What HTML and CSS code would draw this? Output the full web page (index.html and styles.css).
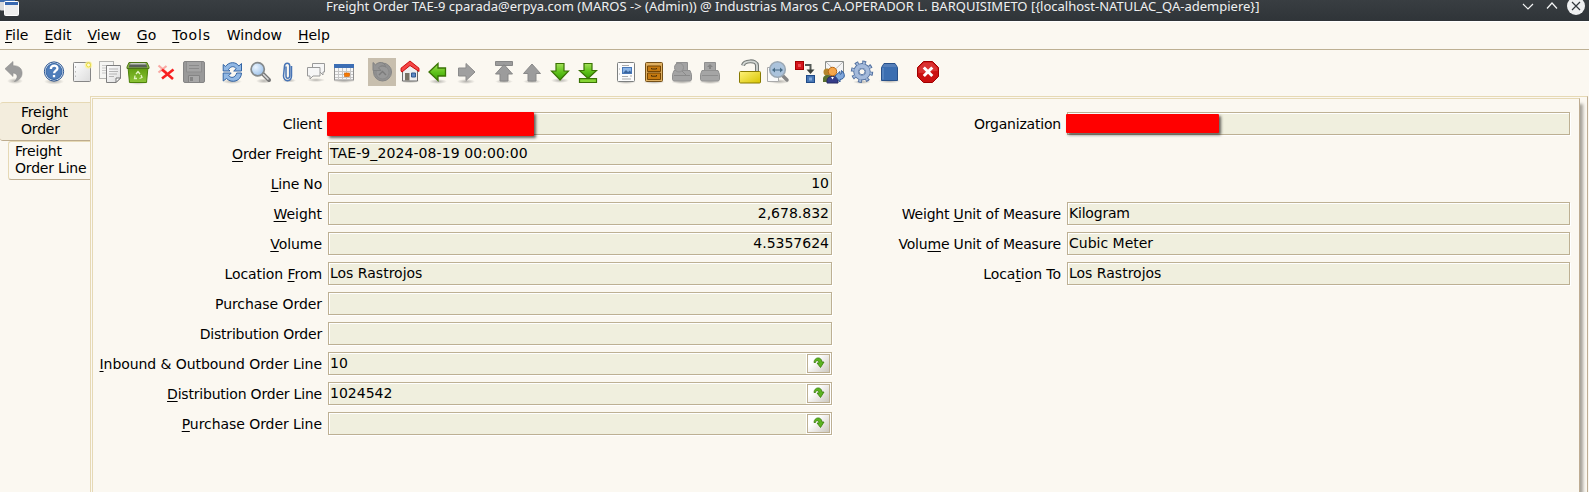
FILE: index.html
```html
<!DOCTYPE html>
<html lang="en">
<head>
<meta charset="utf-8">
<title>Freight Order</title>
<link rel="stylesheet" href="styles.css">
</head>
<body>
<svg class="defs" width="0" height="0" aria-hidden="true">
  <defs>
    <linearGradient id="green" x1="0" y1="0" x2="0" y2="1"><stop offset="0" stop-color="#a4e05a"/><stop offset=".5" stop-color="#62c41c"/><stop offset="1" stop-color="#36a005"/></linearGradient>
    <linearGradient id="paper" x1="0" y1="0" x2="1" y2="1"><stop offset="0" stop-color="#fff"/><stop offset="1" stop-color="#dcdcdc"/></linearGradient>
    <linearGradient id="gold" x1="0" y1="0" x2="1" y2="1"><stop offset="0" stop-color="#fff27a"/><stop offset="1" stop-color="#d8c400"/></linearGradient>
    <radialGradient id="lens" cx=".35" cy=".35" r=".8"><stop offset="0" stop-color="#eaf5ff"/><stop offset="1" stop-color="#91b9e6"/></radialGradient>
    <linearGradient id="can" x1="0" y1="0" x2="0" y2="1"><stop offset="0" stop-color="#5c9a0c"/><stop offset="1" stop-color="#8cc437"/></linearGradient>
    <radialGradient id="shade"><stop offset="0" stop-color="#000" stop-opacity=".28"/><stop offset="1" stop-color="#000" stop-opacity="0"/></radialGradient>
  </defs>
</svg>

<header class="titlebar">
  <svg class="app-icon" width="20" height="16" viewBox="0 0 20 16"><rect x="0" y="-4" width="15" height="14.500" rx="1" fill="#d9dadb"/><path d="M0 0h15v2H0z" fill="#3f6dae"/><rect x="4.500" y="1.500" width="14" height="14" rx="1" fill="#eee" stroke="#fff"/><path d="M5 2h13v3H5z" fill="#3868b0"/></svg>
  <div class="title">Freight Order TAE-9 cparada@erpya.com (MAROS -&gt; (Admin)) @ Industrias Maros C.A.OPERADOR L. BARQUISIMETO [{localhost-NATULAC_QA-adempiere}]</div>
  <svg class="controls" width="68" height="16" viewBox="0 0 68 16"><g fill="none" stroke="#f4f5f5" stroke-width="1.200"><path d="M3 4l5 5 5-5M27 8.500l5-5.500 5 5.500"/></g><circle cx="56" cy="6" r="9" fill="#eff0f1"/><path d="M52 2l8 8M60 2l-8 8" stroke="#31363b" stroke-width="1.200"/></svg>
</header>

<nav class="menubar">
  <span><u>F</u>ile</span><span><u>E</u>dit</span><span><u>V</u>iew</span><span><u>G</u>o</span><span class="tools"><u>T</u>ools</span><span>Window</span><span><u>H</u>elp</span>
</nav>

<div class="toolbar">
  <div class="group">
    <svg viewBox="0 0 28 28"><ellipse cx="15" cy="23" rx="8" ry="3" fill="url(#shade)"/><path d="M5 10.700L13 3.500v4.200c6.500-.2 9.500 3.500 9 8.300-.4 4-3.500 6.500-7.500 7.500 3-3 4.500-7.800-1.500-8.600v3.600z" fill="#9c9c9c" stroke="#8d8d8d" stroke-width=".6"/></svg>
  </div>
  <div class="group">
    <svg viewBox="0 0 28 28"><ellipse cx="14" cy="23.500" rx="10" ry="3" fill="url(#shade)"/><circle cx="14" cy="13.500" r="9.600" fill="#e8eff8" stroke="#25508e"/><circle cx="14" cy="13.500" r="8" fill="#4f7dba" stroke="#3465a4"/><path d="M10.800 11c.2-4.600 7-4.200 6.600-.5-.3 2.200-3.300 2.300-3.300 4.800M14 17v2.200" fill="none" stroke="#fff" stroke-width="2.300"/></svg>
    <svg viewBox="0 0 28 28"><rect x="5.500" y="4.500" width="17" height="19" rx=".8" fill="url(#paper)" stroke="#868686"/><path d="M7.500 8v2m0 3v1.500m0 3V19" stroke="#bbb"/><circle cx="20.500" cy="7" r="3.800" fill="#fff58d" opacity=".7"/><circle cx="20.500" cy="7" r="2" fill="#fffbd0" stroke="#eadb3a"/></svg>
    <svg viewBox="0 0 28 28"><rect x="3.500" y="3.500" width="14" height="17" fill="#f5f5f3" stroke="#b5b5b2"/><path d="M6 7.500h8M6 10h5M6 12.500h4M6 15h4" stroke="#c9c9c9"/><path d="M10.500 7.500h14v12.500l-4.500 4.500h-9.500z" fill="url(#paper)" stroke="#7e7e7e"/><path d="M13 11h9M13 13.500h9M13 16h8M13 18.500h5" stroke="#b4b4b4"/><path d="M24.500 20H20v4.500z" fill="#fff" stroke="#777"/></svg>
    <svg viewBox="0 0 28 28"><ellipse cx="14" cy="24" rx="11" ry="3" fill="url(#shade)"/><path d="M4 9h20l-1.500 15.500h-17z" fill="url(#can)" stroke="#4c8108"/><path d="M5 4.500h18l2 4.500v1.500H3V9z" fill="#8bbd40" stroke="#4e7317"/><path d="M6 5.500h16l1.500 4h-19z" fill="#595f58"/><path d="M6.500 5h15l.5 1.500H6z" fill="#c5cac2"/><path d="M12 16l2-2.500 2 2.500M17 17l1 2.500-2.500 1M13 20.500h-2.500l.5-3" fill="none" stroke="#e2f2c2" stroke-width="1.300"/></svg>
    <svg viewBox="0 0 28 28"><path d="M6.500 7.500l8 7M14.500 8l-8 6.500" stroke="#f9a9a3" stroke-width="2.200" fill="none"/><path d="M10 11.500l11 9.500M21.500 11.500L10 20.500" stroke="#f82020" stroke-width="2.600" fill="none"/></svg>
    <svg viewBox="0 0 28 28"><rect x="3.500" y="3.500" width="21" height="21" rx="1.500" fill="#999" stroke="#858585"/><path d="M6.500 4v10h15V4" fill="#a4a4a4" stroke="#8d8d8d"/><path d="M9 7.500h10M9 10.500h10" stroke="#8b8b8b"/><path d="M8.500 24v-6.500h11V24" fill="#a8a8a8" stroke="#848484"/><path d="M10 19h3v4h-3z" fill="#858585"/></svg>
  </div>
  <div class="group">
    <svg viewBox="0 0 28 28"><ellipse cx="14" cy="23.500" rx="10" ry="2.500" fill="url(#shade)"/><g fill="#91b8e4" stroke="#3465a4"><path d="M5.200 13V6.500l2.300 2C11 3.500 18 3.500 20.800 8l2.700-2.500v7.500h-7.800l2.500-2.300c-2-3-5.500-2.600-7.700.8l1.500 1.500z"/><path d="M23.500 15c-.2 8-9.500 11-15 5.500L5.200 23v-8h8l-2.500 2.700c2.500 2.800 6.500 2.300 8-2.700z"/></g></svg>
    <svg viewBox="0 0 28 28"><ellipse cx="18" cy="23" rx="8" ry="2.500" fill="url(#shade)"/><path d="M16.500 15.500l6.500 6.500" stroke="#777" stroke-width="4" stroke-linecap="round"/><path d="M17 16l5.500 5.500" stroke="#ddd" stroke-width="1.500"/><circle cx="11.700" cy="11.200" r="6.600" fill="url(#lens)" stroke="#858a8c" stroke-width="1.700"/></svg>
    <svg viewBox="0 0 28 28"><ellipse cx="15" cy="22.500" rx="7" ry="2" fill="url(#shade)"/><path d="M12 8.500v9.500c0 3 3.500 3 3.700 0V7.500c-.2-3.200-4.800-3.200-5.200.3L9.500 18c.2 6.500 7.800 6 8 0V8" fill="none" stroke="#4774b5" stroke-width="1.500"/></svg>
    <svg viewBox="0 0 28 28"><ellipse cx="14" cy="22" rx="9" ry="2" fill="url(#shade)"/><g fill="#f6f6f6" stroke="#999"><path d="M10.500 5.500h12v8.500h-1.500v3l-3-3h-7.500z"/><path d="M5.500 9.500h12.500v8.500H11l-3 3v-3H5.500z"/></g></svg>
    <svg viewBox="0 0 28 28"><ellipse cx="14" cy="23" rx="11" ry="2" fill="url(#shade)"/><rect x="4.500" y="6.500" width="19" height="15.500" fill="#f7f7f7" stroke="#8f8f8f"/><path d="M4 6h20v4H4z" fill="#3c6eb4"/><path d="M5 13.500h18M5 16.500h18M5 19.500h18M8.500 10v12M12.500 10v12M16.500 10v12M20.500 10v12" stroke="#c6c6c6"/><rect x="14.500" y="15" width="5" height="3.500" fill="#f57900" stroke="#ce5c00" stroke-width=".6"/></svg>
  </div>
  <div class="group">
    <svg class="pressed" viewBox="0 0 28 28"><circle cx="14.500" cy="14" r="9" fill="#919191" stroke="#858585"/><circle cx="14.500" cy="14.500" r="6.500" fill="#989898" stroke="#8b8b8b"/><path d="M11 17l3.500-3.500L18 17" fill="none" stroke="#7b7b7b" stroke-width="1.400"/><path d="M5 4.500v8h8l-2.500-2.700c2.500-2.500 5-2.500 7-.8C17 4 11 3 7.500 6.800z" fill="#949494" stroke="#828282"/></svg>
    <svg viewBox="0 0 28 28"><ellipse cx="14" cy="23" rx="10" ry="2.500" fill="url(#shade)"/><path d="M6.500 12L14 6l7.500 6v11h-15z" fill="#eee" stroke="#6b6b6b"/><path d="M9 15h4.500v7.500H9z" fill="#777265"/><path d="M15.500 15h4v4h-4z" fill="#5c89c5" stroke="#31588e"/><path d="M5 13.200v-3L14 3l9 7.200v3.300L14 7.500 6 14z" fill="#f54545" stroke="#c50000" stroke-width=".9"/></svg>
    <svg viewBox="0 0 28 28"><ellipse cx="14" cy="23.500" rx="9" ry="2.500" fill="url(#shade)"/><path d="M5 14l9-8.500V10h7.500v8H14v4.500z" fill="url(#green)" stroke="#3a7304" stroke-width="1.300"/></svg>
    <svg viewBox="0 0 28 28"><ellipse cx="14" cy="23.500" rx="9" ry="2.500" fill="url(#shade)"/><path d="M23 14l-9-8.500V10H6.500v8H14v4.500z" fill="#a0a0a0" stroke="#8b8b8b"/></svg>
  </div>
  <div class="group">
    <svg viewBox="0 0 28 28"><ellipse cx="14" cy="23.500" rx="9" ry="2" fill="url(#shade)"/><path d="M5.500 3.500h17v4h-17zM14 6.500l8.500 9.500H18v7h-8v-7H5.500z" fill="#9c9c9c" stroke="#878787"/></svg>
    <svg viewBox="0 0 28 28"><ellipse cx="14" cy="23.500" rx="9" ry="2" fill="url(#shade)"/><path d="M14 6l8.500 9.500H18V23h-8v-7.500H5.500z" fill="#9c9c9c" stroke="#8a8a8a"/></svg>
    <svg viewBox="0 0 28 28"><ellipse cx="14" cy="22.500" rx="9" ry="2.500" fill="url(#shade)"/><path d="M14 22l8.500-9H18V5.500h-8V13H5.500z" fill="url(#green)" stroke="#3a7304" stroke-width="1.200"/></svg>
    <svg viewBox="0 0 28 28"><path d="M5.500 20.700h17v3.800h-17z" fill="#86d535" stroke="#3a7304" stroke-width="1.200"/><path d="M14 20.500l8.500-8H18v-7h-8v7H5.500z" fill="url(#green)" stroke="#3a7304" stroke-width="1.200"/></svg>
  </div>
  <div class="group">
    <svg viewBox="0 0 28 28"><ellipse cx="14" cy="24" rx="10" ry="2" fill="url(#shade)"/><rect x="5.500" y="4.500" width="17" height="19" rx="1" fill="#fcfcfc" stroke="#7d8080"/><path d="M10 7.500h7M18 18h2M10 18.500h6M10 21h9" stroke="#aaa"/><rect x="10.500" y="9.500" width="9" height="6" fill="#8ab4e6" stroke="#4877b7"/><path d="M11 15l3-3 2 2 2-1.500 1.500 2.500z" fill="#3b659c"/><path d="M7 11h1m-1 5h1" stroke="#aaa"/></svg>
    <svg viewBox="0 0 28 28"><ellipse cx="14" cy="24" rx="11" ry="2" fill="url(#shade)"/><rect x="5.500" y="4.500" width="17" height="19" rx="1" fill="#dfb062" stroke="#755018"/><path d="M7.500 8h13v5.500h-13zM7.500 15h13v6.500h-13z" fill="#c67a10" stroke="#754503"/><path d="M11.500 10v1h5v-1M11.500 17v1.200h5V17" fill="none" stroke="#4e3209"/></svg>
    <svg viewBox="0 0 28 28"><ellipse cx="14" cy="24" rx="11" ry="2" fill="url(#shade)"/><g fill="#a3a3a3" stroke="#909090"><path d="M8.500 4.500h11v9H8z"/><path d="M6 12.500h16l1.500 4v5l-1 1.500h-17l-1-1.500v-5z"/><circle cx="11" cy="9.500" r="4.500"/></g><path d="M14 13l4 4M6 17.500h16" stroke="#8a8a8a"/></svg>
    <svg viewBox="0 0 28 28"><ellipse cx="14" cy="24" rx="11" ry="2" fill="url(#shade)"/><g fill="#a5a5a5" stroke="#909090"><path d="M8.500 4.500h11v9h-11z"/><path d="M6 12.500h16l1.500 4v5l-1 1.500h-17l-1-1.500v-5z"/></g><path d="M14 6l3 3h-2v2h-2V9h-2z" fill="#858585"/><path d="M6 17.500h16" stroke="#8e8e8e"/></svg>
  </div>
  <div class="group wide">
    <svg viewBox="0 0 28 28"><path d="M7 7.500c1-5 13.500-6 14 0V14" fill="none" stroke="#747976" stroke-width="4"/><path d="M7 7.500c1-5 13.500-6 14 0V14" fill="none" stroke="#d2d6d3" stroke-width="1.800"/><rect x="3.500" y="13.500" width="21" height="11.500" rx="1" fill="url(#gold)" stroke="#887a00"/></svg>
    <svg viewBox="0 0 28 28"><ellipse cx="15" cy="23.500" rx="11" ry="2.500" fill="url(#shade)"/><path d="M3.500 9.500h11v14h-11z" fill="#fafafa" stroke="#aaa"/><path d="M18 17l5 5" stroke="#858585" stroke-width="3.500" stroke-linecap="round"/><circle cx="13.500" cy="11.500" r="7.800" fill="#abc3dc" stroke="#9ba8b4" stroke-width="1.600"/><path d="M8 12l3-2.500v2h5v-2l3 2.500-3 2.500v-2h-5v2z" fill="#476b86"/></svg>
    <svg viewBox="0 0 28 28"><rect x="3.500" y="3.500" width="8" height="8" fill="#d3141b" stroke="#a40000"/><path d="M6 6h3v3H6z" fill="#ed4c51"/><path d="M13 7h5.500v6" fill="none" stroke="#555a57" stroke-width="2"/><path d="M14.500 11.500h8L18.500 16z" fill="#3b403d"/><rect x="14.500" y="17.500" width="8" height="7" fill="#4776b5" stroke="#204a87"/><path d="M17 19.500h3v3h-3z" fill="#81a8d8"/></svg>
    <svg viewBox="0 0 28 28"><path d="M5.500 3.500h18v14h-18z" fill="#f5f5f5" stroke="#8a8d8a"/><path d="M6 4l8.500 8L23 4" fill="none" stroke="#b7b7b7"/><circle cx="7" cy="14" r="3.500" fill="#b4842b"/><path d="M3 24v-4c1-4 8-4 9 0v4z" fill="#597030"/><path d="M7 25v-3c1-5 10-5 11 0v3z" fill="#363c89" stroke="#272b60"/><circle cx="12.500" cy="13.500" r="4.200" fill="#f5a64b" stroke="#b86815"/><path d="M11 19l1.500 2.500L14 19z" fill="#fff"/><path d="M15 18l5-4.500v2.700c2 0 2-1.500 1.500-3.700 4 3 4 8.500-1.500 9V24z" fill="#7fa6da" stroke="#2e5b9a"/></svg>
    <svg viewBox="0 0 28 28"><ellipse cx="14" cy="24" rx="9" ry="2" fill="url(#shade)"/><circle cx="14" cy="13.700" r="9.300" fill="none" stroke="#506f9f" stroke-width="3.800" stroke-dasharray="3.650 3.650"/><circle cx="14" cy="13.700" r="6" fill="none" stroke="#506f9f" stroke-width="5.400"/><circle cx="14" cy="13.700" r="9" fill="none" stroke="#9fb6d8" stroke-width="2.500" stroke-dasharray="2 5.069" stroke-dashoffset="-.8"/><circle cx="14" cy="13.700" r="5.800" fill="none" stroke="#a4badb" stroke-width="4"/><circle cx="14" cy="13.700" r="3" fill="#fbf8f1" stroke="#617fab"/></svg>
    <svg viewBox="0 0 28 28"><ellipse cx="13.500" cy="23" rx="11" ry="2.500" fill="url(#shade)"/><path d="M8 5.500h11l2.500 4V22.500h-16V9.500z" fill="#3b6eb1" stroke="#285089"/><path d="M8 6h11l1.500 3h-14z" fill="#557fb9"/><path d="M7 10v11.500" stroke="#6b94cb"/></svg>
  </div>
  <div class="group">
    <svg viewBox="0 0 28 28"><path d="M9.500 3.500h9l6 6v9l-6 6h-9l-6-6v-9z" fill="#cb1111" stroke="#a00000"/><path d="M4.500 10l5.300-5.500h8.400l5.300 5.500v3c-7 0-12 2-19 2z" fill="#e34a4a" opacity=".6"/><path d="M9.800 9.500l8.500 8.500M18.300 9.500L9.800 18" stroke="#fff" stroke-width="3"/></svg>
  </div>
</div>

<main class="workspace">
  <aside class="tabs">
    <div class="tab">Freight<br>Order</div>
    <div class="tab active">Freight<br>Order Line</div>
  </aside>
  <section class="outer">
    <div class="inner">
      <div class="column left">
        <label class="tight">Client</label><div class="field"><i class="mask client"></i></div>
        <label class="tight"><u>O</u>rder Freight</label><div class="field date">TAE-9_2024-08-19 00:00:00</div>
        <label class="tight"><u>L</u>ine No</label><div class="field num">10</div>
        <label><u>W</u>eight</label><div class="field num">2,678.832</div>
        <label><u>V</u>olume</label><div class="field num">4.5357624</div>
        <label>Location <u>F</u>rom</label><div class="field">Los Rastrojos</div>
        <label>Purchase Order</label><div class="field"></div>
        <label class="tight">Distribution Order</label><div class="field"></div>
        <label><u>I</u>nbound &amp; Outbound Order Line</label><div class="field id">10<span class="go"><svg viewBox="0 0 12 12"><path d="M1 5.500C1 0 8.500-1 9 5h2L7.500 10.500 4 6h2C6 3 2.500 3 2.500 5.500z" fill="#5bb420" stroke="#377d08" stroke-width=".8"/></svg></span></div>
        <label class="tight"><u>D</u>istribution Order Line</label><div class="field id">1024542<span class="go"><svg viewBox="0 0 12 12"><path d="M1 5.500C1 0 8.500-1 9 5h2L7.500 10.500 4 6h2C6 3 2.500 3 2.500 5.500z" fill="#5bb420" stroke="#377d08" stroke-width=".8"/></svg></span></div>
        <label><u>P</u>urchase Order Line</label><div class="field id"><span class="go"><svg viewBox="0 0 12 12"><path d="M1 5.500C1 0 8.500-1 9 5h2L7.500 10.500 4 6h2C6 3 2.500 3 2.500 5.500z" fill="#5bb420" stroke="#377d08" stroke-width=".8"/></svg></span></div>
      </div>
      <div class="column right">
        <label class="tight">Organization</label><div class="field"><i class="mask org"></i></div>
        <div class="blank"></div>
        <div class="blank"></div>
        <label class="tight">Weight <u>U</u>nit of Measure</label><div class="field tight">Kilogram</div>
        <label class="tight">Volu<u>m</u>e Unit of Measure</label><div class="field">Cubic Meter</div>
        <label>Loca<u>t</u>ion To</label><div class="field">Los Rastrojos</div>
      </div>
    </div>
  </section>
</main>
</body>
</html>
```
FILE: styles.css
```css
* { box-sizing: border-box; }
body {
  margin: 0;
  width: 1589px;
  height: 492px;
  overflow: hidden;
  display: flex;
  flex-direction: column;
  background: #fbf8f1;
  color: #000;
  font: 14px/17px "DejaVu Sans", sans-serif;
}
.defs { position: absolute; }
svg { display: block; flex: none; }
u { text-decoration: underline; text-underline-offset: 2px; text-decoration-thickness: 1px; text-decoration-skip-ink: none; }

.titlebar {
  height: 21px;
  flex: none;
  display: flex;
  align-items: flex-start;
  background: linear-gradient(#393e42, #2f3438);
  color: #eff0f1;
}
.title {
  flex: 1;
  padding-left: 306px;
  font: 13px/13px "Noto Sans", sans-serif;
  white-space: nowrap;
}
.controls { margin-right: 1px; }

.menubar {
  height: 29px;
  flex: none;
  display: flex;
  gap: 16px;
  padding: 5px 5px 0;
  border-top: 1px solid #fff;
  border-bottom: 1px solid #bdb093;
}
.tools { letter-spacing: .8px; }

.toolbar {
  height: 46px;
  flex: none;
  display: flex;
  gap: 10px;
  padding-top: 8px;
}
.group { display: flex; height: 28px; }
.group svg { width: 28px; height: 28px; }
.group:nth-child(2) { margin-left: 2px; }
.group.wide { margin-left: 2px; }
.pressed { background: #c8bfae; }

.workspace { flex: 1; display: flex; min-height: 0; }
.tabs { width: 90px; flex: none; padding-top: 6px; letter-spacing: -.2px; }
.tab {
  height: 39px;
  padding: 1px 0 0 21px;
  border-top: 1px solid #e6d9b5;
  border-bottom: 1px solid #bdac8e;
  background: #f3eddd;
  border-radius: 3px 0 0 3px;
}
.tab.active {
  margin-left: 8px;
  padding-left: 6px;
  border-left: 1px solid #e6d9b5;
  background: #fbf8f1;
}
.outer {
  width: 1498px;
  flex: none;
  padding: 1px 7px 0 1px;
  border: solid #e6d9b5;
  border-width: 1px 1px 0 1px;
  border-right-color: #bdac93;
}
.inner {
  height: 400px;
  display: flex;
  padding-top: 13px;
  border: solid #e6d9b5;
  border-width: 1px 1px 0 1px;
  border-right-color: #bdac93;
  box-shadow: 4px 5px 3px -1px #a5a198;
}
.column {
  display: grid;
  grid-auto-rows: 23px;
  row-gap: 7px;
  align-content: start;
}
.left { grid-template-columns: 235px 504px; }
.right { grid-template-columns: 235px 503px; }
label {
  padding: 4px 6px 0 0;
  text-align: right;
  white-space: nowrap;
  letter-spacing: -.06px;
}
.tight { letter-spacing: -.2px; }
.blank { grid-column: 1 / -1; }
.field {
  position: relative;
  display: flex;
  padding: 2px 1px 0;
  border: 1px solid #bdb093;
  background: #f0efde;
  box-shadow: inset 1px 1px #fff, 1px 1px #fff;
  white-space: nowrap;
}
.date { letter-spacing: .09px; }
.num { justify-content: flex-end; padding-right: 2px; }
.go {
  width: 23px;
  height: 19px;
  margin: -1px 0 0 auto;
  display: flex;
  justify-content: center;
  padding-top: 2px;
  border: 1px solid #bdb093;
  background: linear-gradient(135deg, #fff 30%, #ccc8bf);
  box-shadow: 0 0 0 1px #fff;
}
.go svg { width: 12px; height: 12px; }
.mask {
  position: absolute;
  left: -2px;
  border-radius: 1px;
  background: #f00;
  box-shadow: 2px 2px 3px rgba(0, 0, 0, .6);
}
.client { top: -1px; width: 207px; height: 24px; }
.org { top: 1px; width: 153px; height: 19px; }
```
